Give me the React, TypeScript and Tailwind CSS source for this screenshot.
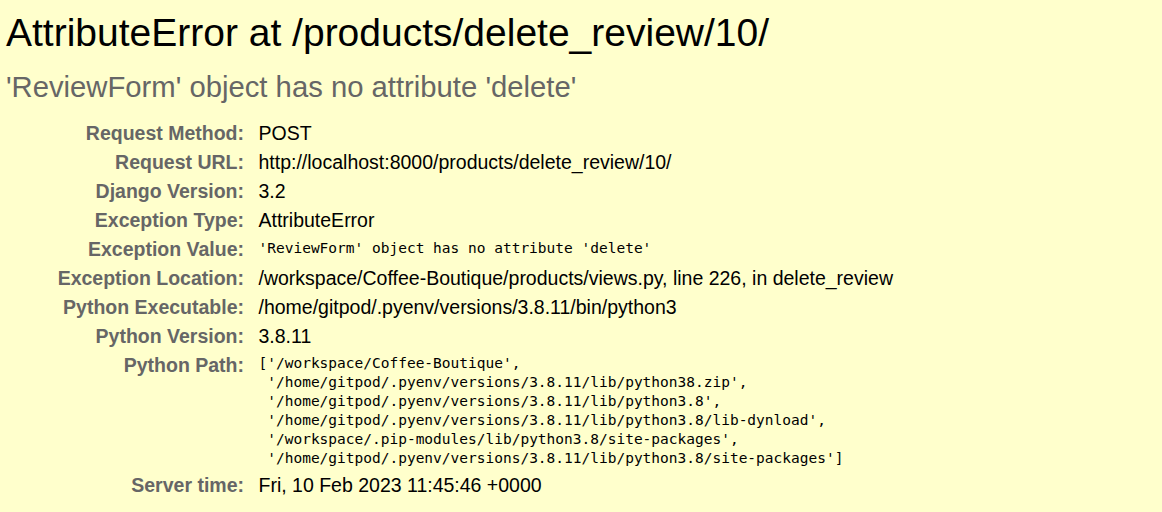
import React from "react";

const rows: [string, string, "sans" | "mono"][] = [
  ["Request Method:", "POST", "sans"],
  ["Request URL:", "http://localhost:8000/products/delete_review/10/", "sans"],
  ["Django Version:", "3.2", "sans"],
  ["Exception Type:", "AttributeError", "sans"],
  ["Exception Value:", "'ReviewForm' object has no attribute 'delete'", "mono"],
  ["Exception Location:", "/workspace/Coffee-Boutique/products/views.py, line 226, in delete_review", "sans"],
  ["Python Executable:", "/home/gitpod/.pyenv/versions/3.8.11/bin/python3", "sans"],
  ["Python Version:", "3.8.11", "sans"],
];

const pythonPath = `['/workspace/Coffee-Boutique',
 '/home/gitpod/.pyenv/versions/3.8.11/lib/python38.zip',
 '/home/gitpod/.pyenv/versions/3.8.11/lib/python3.8',
 '/home/gitpod/.pyenv/versions/3.8.11/lib/python3.8/lib-dynload',
 '/workspace/.pip-modules/lib/python3.8/site-packages',
 '/home/gitpod/.pyenv/versions/3.8.11/lib/python3.8/site-packages']`;

function Row({ label, children }: { label: string; children: React.ReactNode }) {
  return (
    <div className="flex items-start py-[3px]">
      <div className="w-[238px] shrink-0 text-right font-bold text-[#666666] text-[19.5px] leading-[23px]">
        {label}
      </div>
      <div className="pl-[14.5px] text-[19.5px] leading-[23px] text-black">{children}</div>
    </div>
  );
}

export default function App() {
  return (
    <div className="min-h-[512px] w-full bg-[#ffffcc] pl-[6px] pt-[10px] font-['Liberation_Sans',Arial,sans-serif] text-black">
      <h1 className="text-[39px] leading-[45px] font-normal">AttributeError at /products/delete_review/10/</h1>
      <h2 className="mt-[15px] text-[29.25px] leading-[34px] font-normal text-[#666666]">
        'ReviewForm' object has no attribute 'delete'
      </h2>
      <div className="mt-[14.5px]">
        {rows.map(([label, value, kind]) => (
          <Row key={label} label={label}>
            {kind === "mono" ? (
              <pre className="pt-[1px] font-['DejaVu_Sans_Mono',monospace] text-[14.5px] leading-[19px] whitespace-pre-wrap">
                {value}
              </pre>
            ) : (
              value
            )}
          </Row>
        ))}
        <Row label="Python Path:">
          <pre className="font-['DejaVu_Sans_Mono',monospace] text-[14.5px] leading-[19px] whitespace-pre-wrap">
            {pythonPath}
          </pre>
        </Row>
        <Row label="Server time:">Fri, 10 Feb 2023 11:45:46 +0000</Row>
      </div>
    </div>
  );
}
